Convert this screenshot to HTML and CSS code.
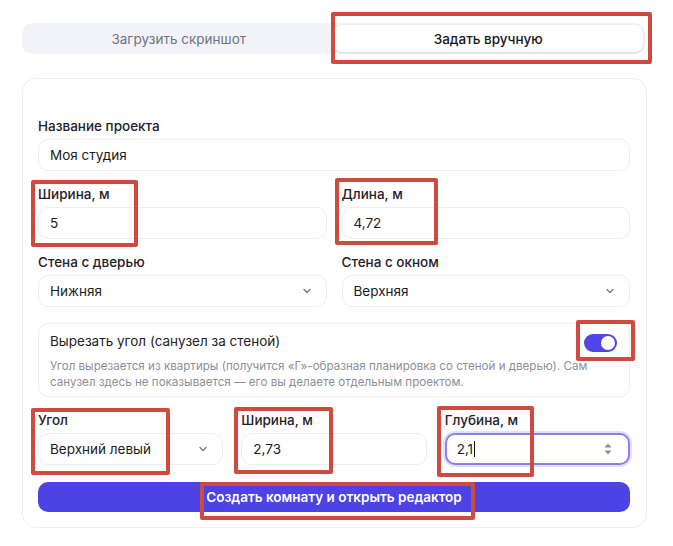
FILE: index.html
```html
<!DOCTYPE html>
<html lang="ru">
<head>
<meta charset="utf-8">
<link rel="stylesheet" href="styles.css">
</head>
<body>
<div class="page">
  <div class="tabs">
    <div class="tab">Загрузить скриншот</div>
    <div class="tab active">Задать вручную</div>
  </div>

  <div class="card">
    <div class="field">
      <label class="label">Название проекта</label>
      <div class="input">Моя студия</div>
    </div>

    <div class="row two">
      <div class="field">
        <label class="label">Ширина, м</label>
        <div class="input">5</div>
      </div>
      <div class="field">
        <label class="label">Длина, м</label>
        <div class="input">4,72</div>
      </div>
    </div>

    <div class="row two">
      <div class="field">
        <label class="label">Стена с дверью</label>
        <div class="input select">Нижняя
          <svg class="chev" viewBox="0 0 12 12"><path d="M3 4.5l3 3 3-3"/></svg>
        </div>
      </div>
      <div class="field">
        <label class="label">Стена с окном</label>
        <div class="input select">Верхняя
          <svg class="chev" viewBox="0 0 12 12"><path d="M3 4.5l3 3 3-3"/></svg>
        </div>
      </div>
    </div>

    <div class="cutbox">
      <div class="cut-head">
        <div class="cut-title">Вырезать угол (санузел за стеной)</div>
        <div class="toggle"><span class="knob"></span></div>
      </div>
      <div class="cut-desc">Угол вырезается из квартиры (получится «Г»-образная планировка со стеной и дверью). Сам<br>санузел здесь не показывается — его вы делаете отдельным проектом.</div>
    </div>

    <div class="row three">
      <div class="field">
        <label class="label">Угол</label>
        <div class="input select">Верхний левый
          <svg class="chev" viewBox="0 0 12 12"><path d="M3 4.5l3 3 3-3"/></svg>
        </div>
      </div>
      <div class="field">
        <label class="label">Ширина, м</label>
        <div class="input">2,73</div>
      </div>
      <div class="field">
        <label class="label">Глубина, м</label>
        <div class="input focus"><span>2,1<span class="caret"></span></span>
          <svg class="spin" viewBox="0 0 10 14"><path d="M5 1.5L8.5 5.5H1.5Z"/><path d="M5 12.5L1.5 8.5H8.5Z"/></svg>
        </div>
      </div>
    </div>

    <button class="submit">Создать комнату и открыть редактор</button>
  </div>

  <div class="mark" style="left:331px;top:12px;width:321px;height:52px"></div>
  <div class="mark" style="left:31px;top:180px;width:107px;height:67px"></div>
  <div class="mark" style="left:335px;top:178px;width:103px;height:67px"></div>
  <div class="mark" style="left:576px;top:320px;width:59px;height:41px"></div>
  <div class="mark" style="left:31px;top:408px;width:139px;height:67px"></div>
  <div class="mark" style="left:234px;top:407px;width:99px;height:67px"></div>
  <div class="mark" style="left:437px;top:406px;width:97px;height:71px"></div>
  <div class="mark" style="left:200px;top:482px;width:275px;height:38px"></div>
</div>
</body>
</html>
```

FILE: styles.css
```css
* { box-sizing: border-box; }
html, body { margin: 0; padding: 0; background: #ffffff; }
body {
  font-family: Inter, "Noto Sans", "Liberation Sans", sans-serif;
  color: #1d1f24;
  width: 673px;
  height: 546px;
  overflow: hidden;
}
.page {
  position: relative;
  padding: 23px 26px 0 22px;
  height: 546px;
}
.tabs {
  display: flex;
  width: 623px;
  height: 31px;
  padding: 2px;
  background: #f1f3f9;
  border-radius: 10px;
}
.tab {
  flex: 1;
  display: flex;
  align-items: center;
  justify-content: center;
  font-size: 13.5px;
  color: #6f737c;
  border-radius: 8px;
}
.tab.active {
  background: #ffffff;
  color: #15171b;
  font-weight: 500;
  box-shadow: 0 1px 3px rgba(20, 24, 40, 0.10);
}
.card {
  margin-top: 24px;
  width: 625px;
  border: 1px solid #eceef2;
  border-radius: 14px;
  padding: 38px 16px 15px 15px;
  display: flex;
  flex-direction: column;
  gap: 14px;
}
.field {
  display: flex;
  flex-direction: column;
  gap: 4px;
  min-width: 0;
}
.label {
  font-size: 13.5px;
  line-height: 18px;
  font-weight: 500;
  color: #1f2128;
}
.input {
  height: 32px;
  border: 1px solid #eceef2;
  border-radius: 10px;
  padding: 0 11px;
  display: flex;
  align-items: center;
  justify-content: space-between;
  font-size: 13.5px;
  color: #1a1c21;
  background: #fff;
}
.chev {
  width: 12px;
  height: 12px;
  fill: none;
  stroke: #7d818a;
  stroke-width: 1.5;
  stroke-linecap: round;
  stroke-linejoin: round;
  margin-right: 2px;
}
.row { display: grid; }
.row.two { grid-template-columns: 1fr 1fr; gap: 15px; }
.row.three { grid-template-columns: 1fr 1fr 1fr; gap: 18px; }
.cutbox {
  margin-top: 2px;
  border: 1px solid #eceef2;
  border-radius: 10px;
  padding: 8px 12px 6px 11px;
}
.cut-head {
  display: flex;
  justify-content: space-between;
  align-items: center;
  height: 18px;
}
.cut-title {
  font-size: 13.5px;
  color: #1f2128;
}
.toggle {
  width: 33px;
  height: 18px;
  border-radius: 9px;
  background: #4f46e5;
  position: relative;
  margin-top: 3px;
}
.knob {
  position: absolute;
  right: 2px;
  top: 2px;
  width: 14px;
  height: 14px;
  border-radius: 50%;
  background: #fff;
}
.cut-desc {
  margin-top: 8px;
  font-size: 11.6px;
  line-height: 16px;
  color: #8b8f98;
  white-space: nowrap;
}
.input.focus {
  border: 2px solid #8a7ff0;
  box-shadow: 0 0 0 2px #e3e0fb;
  padding: 0 10px;
}
.caret {
  display: inline-block;
  width: 1px;
  height: 16px;
  background: #111;
  vertical-align: -3px;
  margin-left: 1px;
}
.spin {
  width: 10px;
  height: 14px;
  fill: #8a8d94;
  margin-right: 5px;
}
.submit {
  margin-top: 3px;
  height: 30px;
  border: none;
  border-radius: 10px;
  background: #4d42e3;
  color: #fff;
  font-family: inherit;
  font-size: 13.5px;
  font-weight: 600;
}
.mark {
  position: absolute;
  border: 4px solid #cf4a3f;
  border-radius: 2px;
}
```
